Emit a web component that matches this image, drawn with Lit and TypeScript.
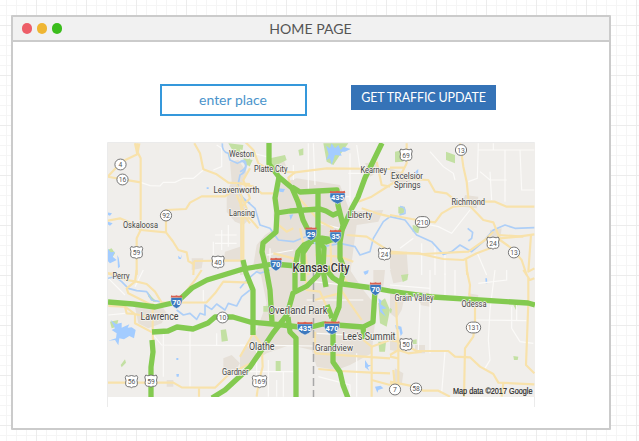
import { LitElement, html, svg, css } from "lit";
import { customElement } from "lit/decorators.js";

// Every list of map sections uses a local origin and a 3:1 drawing scale.
interface Section { x: number; y: number; d: string[] }

const urban: Section[] = [
  { x: 100, y: 135, d: [
    "M390 80L415 75L440 110L425 150L425 195L450 250L430 270L405 260L380 230L380 170L395 140Z",
    "M375 350L420 335L420 380L370 380Z M275 370L310 370L305 400L275 405Z"] },
  { x: 240, y: 135, d: [
    "M0 250L8 290L8 420L0 420Z",
    "M110 150L170 130L300 150L330 230L430 225L415 260L350 270L330 420L60 420L40 390L50 330L75 300L105 280L100 240Z",
    "M85 80L130 70L140 100L110 120Z M375 85L410 80L415 110L390 125Z"] },
  { x: 390, y: 135, d: ["M0 100L60 120L60 150L0 140Z M225 180L265 185L260 220L215 215Z M0 355L50 350L55 420L10 420L0 400Z M300 285L335 280L330 315L300 310Z"] },
  { x: 100, y: 270, d: [
    "M105 110L180 100L200 130L185 160L145 175L115 160Z",
    "M370 265L395 255L420 280L400 310L370 300Z M200 330L220 330L220 350L200 350Z"] },
  { x: 240, y: 270, d: [
    "M60 0L330 0L370 60L410 110L395 250L330 285L290 300L230 290L215 240L150 225L80 250L0 300L0 260L50 180L80 100Z",
    "M400 0L435 0L430 50L400 50Z"] },
  { x: 390, y: 270, d: [
    "M0 0L50 0L35 35L10 40Z M0 70L45 75L35 120L20 145L0 130Z M90 65L125 70L120 110L90 105Z",
    "M0 200L40 205L30 245L0 240Z M15 295L40 310L35 345L10 335Z M75 225L105 225L105 250L75 250Z M235 70L265 75L260 110L235 105Z"] },
];

const parks: Section[] = [
  { x: 240, y: 135, d: ["M10 70L38 75L30 92L15 90Z M90 70L135 60L140 75L110 90L95 105Z M250 25L325 25L310 45L280 90L260 80Z M175 45L190 40L190 60L178 62Z"] },
  { x: 100, y: 135, d: ["M385 25L430 30L425 60L400 50Z M435 80L450 70L450 95Z M22 345L35 340L45 355L35 370Z"] },
  { x: 390, y: 135, d: ["M15 50L40 45L40 80L15 82Z M168 50L195 60L195 85L168 75Z M25 215L45 215L40 240L25 235Z M68 270L90 275L85 295L68 290Z"] },
  { x: 100, y: 270, d: ["M30 155L55 150L50 170L35 175Z M362 180L378 178L384 212L365 215Z M62 285L75 268L78 278L65 292Z M143 65L155 80L170 95L160 95L145 80Z"] },
  { x: 240, y: 270, d: ["M107 273L122 273L122 303L107 303Z M70 108L88 108L88 125L70 125Z M415 100L435 85L450 120L440 170L420 160Z M415 215L438 215L435 245L418 245Z"] },
  { x: 390, y: 270, d: ["M33 15L55 12L52 30L38 36Z M68 210L80 208L80 222L68 222Z M370 258L385 260L383 270L372 270Z M370 105L383 105L378 120Z M0 113L6 118L4 128L0 128Z"] },
];

const lakes: Section[] = [
  { x: 100, y: 135, d: ["M23 232L36 235L30 242L23 240Z M23 260L38 265L30 272L23 268Z M23 340L32 352L45 350L38 365L50 375L30 385L23 378Z M52 360L56 368L60 395L54 400Z M234 362L242 368L246 358L243 372L236 372Z M320 157L326 157L326 162L320 162Z"] },
  { x: 240, y: 135, d: ["M258 32L270 40L275 25L285 40L295 30L302 45L310 35L332 42L315 50L300 50L305 62L285 60L275 90L270 70L258 75L266 58Z M115 160L135 162L130 172L118 170Z M148 240L160 238L152 255Z"] },
  { x: 100, y: 270, d: ["M32 150L48 162L65 158L65 173L88 163L83 173L95 172L107 180L102 205L88 198L72 208L58 205L55 226L45 210L25 212L48 205L50 190L35 180L45 175Z M229 264L235 264L235 270L229 270Z M229 312L237 312L236 320L230 320Z"] },
  { x: 240, y: 270, d: ["M415 85L425 92L422 103L440 115L425 118L438 140L420 125L418 105Z M375 270L385 285L395 285L383 292L388 302L375 292Z M405 350L422 347L430 355L415 360L412 368Z M370 5L386 0L384 10L375 15Z"] },
  { x: 390, y: 270, d: ["M16 165L34 170L38 190L32 198L28 178L18 178Z M286 25L291 25L292 40L287 40Z"] },
  { x: 390, y: 135, d: ["M75 110L85 102L84 120L77 120Z"] },
];

const rivers: Section[] = [
  { x: 100, y: 135, d: ["M367 25Q365 50 385 55L390 75L412 85Q435 70 438 95Q435 115 420 120L412 160L432 195L450 205"] },
  { x: 240, y: 135, d: [
    "M0 80Q18 70 18 90Q15 105 0 110 M0 180L45 220L60 270L90 280L115 315L160 320L210 300",
    "M200 315L250 335L300 325L345 335L360 360L390 350L400 310L430 260L450 245"] },
  { x: 390, y: 135, d: [
    "M0 245L45 255L80 300L125 320L160 358L185 350L210 330L245 350L280 320L310 285L345 270L375 280L433 278",
    "M233 280L248 292L245 310L235 318 M30 215Q48 215 45 235L28 240"] },
  { x: 100, y: 270, d: [
    "M23 25L45 20L65 35L85 55L110 62L140 65L155 90L180 95",
    "M230 120L250 135L270 130L290 148L300 130L315 135L315 105L335 118L350 102L375 120L385 100L410 108L425 80L450 60"] },
  { x: 240, y: 270, d: ["M0 55L20 30L50 5L60 10 M60 10L90 0"] },
];

const lanes: Section[] = [
  { x: 100, y: 135, d: ["M122 142L150 152L180 153L190 142L225 142L250 130L280 130L310 105 M365 40L365 95L340 105 M365 40L350 30 M340 320L340 365 M345 300H410 M365 285V345 M385 270V335 M345 325H410"] },
  { x: 240, y: 135, d: ["M0 45L60 60L80 65 M205 25V165 M220 25L225 150 M160 90V135 M330 55V200 M350 30L360 100 M300 185H330 M325 115H440 M240 265L300 280 M80 360L160 345 M90 340V400"] },
  { x: 390, y: 135, d: ["M120 50L160 95L190 115L195 135 M265 25L262 130L235 140 M265 45H433 M345 45V200 M300 110L305 195 M310 25V45 M390 45L395 165H433 M100 265L145 275L185 295L240 225 M70 310L30 340 M95 325V420 M135 330V420 M260 350L290 420 M350 135H300L270 110 M165 360V420"] },
  { x: 100, y: 270, d: ["M160 195L185 225L450 227 M190 180V320 M270 175V350 M75 75L20 20 M130 0L105 50 M310 60V95 M350 190V227 M25 135L75 130"] },
  { x: 240, y: 270, d: ["M0 225L220 228 M50 225V375 M85 270V380 M0 305H160 M110 330V380 M130 305V380 M235 320L330 345V380 M350 250V380 M220 35L310 45 M200 90L370 90 M230 190L420 200"] },
  { x: 390, y: 270, d: ["M120 0V250 M90 100L85 240 M165 10V90 M315 0L300 120L295 210L300 270L285 295 M255 150L410 152 M365 110L365 175L390 215L430 220 M0 45L120 55 M195 0V75 M265 40L350 30V0 M165 245L155 370 M380 90V150"] },
];

const highways: Section[] = [
  { x: 100, y: 135, d: [
    "M112 25V50L122 70V142V285 M105 25L112 58 M118 25L112 58L65 80L23 125L68 133L122 142",
    "M283 25L300 55L310 103L350 118L385 143L450 147 M198 228V225L258 222L270 203L305 184L375 184L410 160",
    "M198 225V292 M23 257L60 250L85 260L122 285L198 292L218 318L235 345L260 352L265 378L282 388",
    "M122 285L110 310V420 M282 378L424 376V190 M282 378L280 420 M410 150L440 220L435 245L450 265 M410 180L425 215L450 190L430 135L450 100 M23 415L90 420"] },
  { x: 240, y: 135, d: [
    "M15 20L40 45L55 85L95 108L165 112L260 100L450 102",
    "M165 112L145 128L155 165L200 215L240 260L280 280",
    "M0 145L40 155L65 175L100 175 M0 210L25 245L55 280 M410 80L425 150L450 155 M355 200L395 185L450 150",
    "M365 220L410 235L450 245 M110 265L140 290L160 280 M10 380V240 M100 355L160 370V420 M180 280L195 350L205 420",
    "M225 360L300 365L340 380 M320 300L380 305L450 350 M270 290L275 420"] },
  { x: 390, y: 135, d: [
    "M50 25L50 85L35 115L0 120 M0 98L45 98 M0 150L30 130L115 135L135 170L170 175L200 200L235 210",
    "M210 25L220 95L230 140L237 210 M237 210L190 215L155 235L135 262L65 252L0 240",
    "M237 210L270 200L315 200L350 215H433 M237 210L280 255L310 262L325 300L330 315L365 340L395 375L410 420",
    "M0 355L85 355L160 372L220 375L260 355L300 340L330 310L385 305L433 298",
    "M0 350L100 357L235 350L285 315L310 290 M325 300L400 305 M228 370L232 420 M423 300L415 410L433 400"] },
  { x: 100, y: 270, d: [
    "M110 0L105 35L80 55L85 70L155 105 M23 10L80 30L110 35L140 42L165 65L185 98L320 97L345 70L370 35L450 38",
    "M305 0L285 30L235 95 M75 110L80 130L105 132V160L158 188L160 240 M25 108L75 110L105 132L158 145L185 130 M158 100V188",
    "M23 338H220L245 352L345 353L385 315L450 280 M297 353V380"] },
  { x: 240, y: 270, d: [
    "M40 190L65 225L68 290L55 340L50 380 M40 190L0 260",
    "M195 0L200 60L240 65L260 110L290 160 M300 55L330 100L365 150 M370 210L395 230V380 M225 250L450 265 M235 297L300 303L395 308L450 310",
    "M395 230L450 210 M330 50L310 20 M225 90L260 80L300 70 M395 330L450 345 M225 185V250"] },
  { x: 390, y: 270, d: [
    "M230 0L240 45L238 75L255 105V155L250 200L225 235L222 380 M415 20L415 98L408 285L433 310 M400 0L420 30L433 25",
    "M18 75L20 145L25 220V350L0 340 M0 210L25 215L80 243L175 243L195 260L240 262L270 290L310 312L325 338L433 343",
    "M25 265L0 260 M25 240L55 250L95 245 M0 255L25 240 M0 335L75 350L100 362L145 362L180 380 M340 340L335 380 M10 300L15 350"] },
];

const green = [
  "M269 143V164L279 177L292 188L298 202L303 220L308 230L314 241",
  "M279 177L275 198L277 213L276 232L263 243L262 252L266 268L270 290L272 322",
  "M292 187L300 192L337 190L338 205L343 225L340 242V258L344 268L340 287L339 307L333 322",
  "M277 213L290 211L320 209L326 211L333 215L338 213",
  "M382 143L365 178L358 197L352 208L343 228L335 240L322 238L311 240",
  "M318 192V241L319 272",
  "M108 302L133 304L155 307L177 302L192 288L207 280L243 269L273 264L297 266L312 269",
  "M327 266L328 272L333 278L343 284L373 288L390 291L433 297L528 303L535 305",
  "M152 332L168 331L177 327L193 329L208 323L215 317H233L250 322L283 325L307 328L323 324L363 327L373 322L375 290",
  "M152 340L153 352L151 367V398",
  "M212 398L225 390L250 367L263 348L273 333L287 315L293 293L307 286L318 275L320 266",
  "M288 317L290 332L296 338V398",
  "M333 323V362L340 372L343 385L348 398",
  "M243 260L246 273L253 290V335",
  "M313 241L304 245L298 252L295 268V290",
  "M311 241L303 253V281 M318 240L324 248L323 270L326 287 M319 238L326 242L336 238",
  "M327 305L332 318 M363 327L364 339",
];

// text, x, baseline, width, font size
const places: [string, number, number, number, number][] = [
  ["Weston", 229, 157, 25, 8.8], ["Platte City", 254, 172, 33.5, 8.8], ["Kearney", 360.5, 172.5, 26.5, 8.8],
  ["Excelsior", 391, 179, 32, 8.8], ["Springs", 394, 188, 26.5, 8.8], ["Richmond", 451.5, 205, 33.5, 8.8],
  ["Leavenworth", 213.5, 193, 46, 8.8], ["Lansing", 229, 216, 26, 8.8], ["Liberty", 347.5, 218, 24.5, 9.2],
  ["Oskaloosa", 123, 228, 35, 8.8], ["Perry", 112.5, 279, 17, 8.8], ["Lawrence", 140.5, 320, 38, 10.3],
  ["Overland Park", 268.5, 313.5, 59, 11], ["Olathe", 249, 350.3, 25.5, 10], ["Grandview", 315, 350.7, 38, 9],
  ["Lee's Summit", 342.5, 339.5, 53, 10.3], ["Gardner", 222, 375, 26.5, 8.8], ["Grain Valley", 394.5, 301, 39, 8.8],
  ["Odessa", 461.5, 307, 25, 8.8],
];

// number, centre x, centre y, kind: o = round state shield, u = US shield
const shields: [string, number, number, string][] = [
  ["4", 120.5, 164.5, "o"], ["16", 122.5, 179.5, "o"], ["92", 166, 215.5, "o"], ["59", 136.5, 252.5, "u"],
  ["40", 218, 262, "u"], ["69", 406, 155, "u"], ["13", 461, 150, "o"], ["210", 422.5, 222, "o"],
  ["24", 493, 243, "u"], ["13", 514, 252.5, "o"], ["24", 384.5, 254, "u"], ["10", 222.5, 317.5, "o"],
  ["56", 131.5, 381.5, "u"], ["59", 151, 381, "u"], ["169", 259.5, 381.5, "u"], ["131", 473.5, 327.5, "o"],
  ["50", 406, 344.5, "u"], ["7", 395, 389.5, "o"], ["58", 416, 388.5, "o"],
];
const interstates: [string, number, number][] = [
  ["435", 337.5, 197], ["29", 311, 233.5], ["35", 335.5, 236], ["70", 276, 264],
  ["70", 176.5, 301.5], ["70", 375.5, 288.5], ["435", 305, 328], ["470", 332, 327.5],
];

const layer = (sections: Section[], cls: string) => sections.map(
  (s) => svg`<g class=${cls} transform="translate(${s.x} ${s.y}) scale(.33333)">${s.d.map((d) => svg`<path d=${d}></path>`)}</g>`
);

@customElement("traffic-map")
class TrafficMap extends LitElement {
  static styles = css`
    :host { display: block; width: 429px; height: 266px; }
    svg { display: block; overflow: visible; }
    .urban path { fill: #e6e0d8; }
    .parks path { fill: #c3e0a3; }
    .lakes path { fill: #a3ccff; }
    .rivers path { fill: none; stroke: #aecff7; stroke-width: 5; stroke-linejoin: round; }
    .lanes path { fill: none; stroke: #fbfaf8; stroke-width: 3.5; }
    .highways path { fill: none; stroke: #f8e2ab; stroke-width: 6.5; stroke-linejoin: round; }
    .green { fill: none; stroke: #83ca50; stroke-width: 5.3; stroke-linejoin: round; }
    .border { stroke: #a8a8a8; stroke-width: 1.5; stroke-dasharray: 8 4; }
    text { font-family: Roboto, "Liberation Sans", sans-serif; }
    .place { fill: #454545; stroke: #f5f3ef; stroke-width: 1.6; paint-order: stroke; }
    .city { font-size: 12px; font-weight: 500; fill: #333; }
    .sign { fill: #fff; stroke: #666; stroke-width: 0.9; }
    .num { font-size: 7.5px; fill: #555; text-anchor: middle; }
    .inum { font-size: 7.6px; font-weight: 700; fill: #fff; text-anchor: middle; }
    .blue { fill: #3c78bd; stroke: #e9eef5; stroke-width: 0.5; }
    .red { fill: #d9604f; }
    .credit { font-family: "Liberation Sans", sans-serif; font-size: 8.2px; fill: #222; stroke: #222; stroke-width: 0.15; }
    .frame { fill: none; stroke: #ebebeb; }
  `;

  render() {
    return html`<svg width="429" height="266" viewBox="107 142 429 266">
      <defs><clipPath id="area"><rect x="108" y="143" width="427" height="254"></rect></clipPath></defs>
      <path class="frame" d="M107.5 407V142.5H534.5V407"></path>
      <g clip-path="url(#area)">
        <rect x="108" y="143" width="427" height="254" fill="#f0eeeb"></rect>
        ${layer(urban, "urban")}${layer(parks, "parks")}${layer(lakes, "lakes")}${layer(lanes, "lanes")}
        ${layer(rivers, "rivers")}${layer(highways, "highways")}
        <path class="border" d="M313.5 270V397"></path>
        ${green.map((d) => svg`<path class="green" d=${d}></path>`)}
      </g>
      ${shields.map(([n, x, y, kind]) => {
        const w = n.length > 2 ? 7.2 : kind === "u" ? 6.2 : 5.6;
        return svg`<g transform="translate(${x} ${y})">${kind === "o"
          ? svg`<rect class="sign" x=${-w} y="-5.4" width=${2 * w} height="10.8" rx="5.4"></rect>`
          : svg`<path class="sign" d="M${-w + 1} -6L${-w / 2} -5.2L0 -6L${w / 2} -5.2L${w - 1} -6L${w} -4L${w - 0.7} -1Q${w + 0.6} 4.5 ${w - 2.5} 5.2Q1 5 0 6.2Q-1 5 ${-w + 2.5} 5.2Q${-w - 0.6} 4.5 ${-w + 0.7} -1L${-w} -4Z"></path>`}
          <text class="num" y="2.7" textLength=${n.length * 3.8} lengthAdjust="spacingAndGlyphs">${n}</text></g>`;
      })}
      ${interstates.map(([n, x, y]) => {
        const w = n.length > 2 ? 7.8 : 5.8;
        return svg`<g transform="translate(${x} ${y})">
          <path class="blue" d="M${-w + 0.3} -4H${w - 0.3}Q${w + 1.2} 4 0 7Q${-w - 1.2} 4 ${-w + 0.3} -4Z"></path>
          <path class="red" d="M${-w + 0.5} -6.3Q${-w / 2} -5.3 0 -6.3Q${w / 2} -5.3 ${w - 0.5} -6.3L${w} -4H${-w}Z"></path>
          <text class="inum" y="3">${n}</text></g>`;
      })}
      ${places.map(([t, x, y, w, s]) => svg`<text class="place" x=${x} y=${y} font-size=${s} textLength=${w} lengthAdjust="spacingAndGlyphs">${t}</text>`)}
      <text class="place city" x="292.5" y="271.5" textLength="57" lengthAdjust="spacingAndGlyphs">Kansas City</text>
      <text class="credit" x="453" y="393.8" textLength="79.5" lengthAdjust="spacingAndGlyphs">Map data ©2017 Google</text>
    </svg>`;
  }
}

@customElement("app-root")
class AppRoot extends LitElement {
  static styles = css`
    :host {
      display: block; box-sizing: border-box; height: 441px; overflow: hidden;
      padding: 15px 28px 10px 11px;
      font-family: Lato, "Liberation Sans", sans-serif;
      background-color: #fff;
      background-image:
        linear-gradient(90deg, #ececec 1px, transparent 1px),
        linear-gradient(#ececec 1px, transparent 1px),
        linear-gradient(90deg, #f5f5f5 1px, transparent 1px),
        linear-gradient(#f5f5f5 1px, transparent 1px);
      background-size: 50px 50px, 50px 50px, 10px 10px, 10px 10px;
      background-position: 36px 0, 0 25px, 6px 0, 0 5px;
    }
    .window {
      box-sizing: border-box; width: 600px; height: 415px;
      border: 2px solid #cbcbcb; border-radius: 1px; background: #fff;
      display: flex; flex-direction: column;
    }
    .bar {
      box-sizing: border-box; height: 25px; flex: none; background: #f1f1f1; border-bottom: 2px solid #cbcbcb;
      display: grid; grid-template-columns: 60px 1fr 60px; align-items: center;
    }
    .dots { display: flex; gap: 4.5px; padding-left: 8.5px; }
    .dot { width: 10.5px; height: 10.5px; border-radius: 50%; }
    .close { background: #ed5e68; }
    .min { background: #efb633; }
    .max { background: #3bbd1c; }
    .title { text-align: center; font-size: 14.1px; line-height: 22px; color: #555; padding-right: 1px; }
    .controls { display: flex; align-items: flex-start; gap: 44px; padding: 42px 0 0 147px; height: 32px; }
    .place {
      box-sizing: border-box; width: 147px; height: 32px; border: 2px solid #3598db;
      text-align: center; font-size: 14px; line-height: 28px; color: #4b94cb; padding-right: 1px;
    }
    .update {
      box-sizing: border-box; width: 145px; height: 25px; margin-top: 1px; border: 0; padding: 0;
      background: #3573b7; color: #fff; font: 12.5px/25px Lato, "Liberation Sans", sans-serif; white-space: nowrap;
      text-align: center; letter-spacing: -0.15px;
    }
    traffic-map { margin: 26px 0 0 94px; }
  `;

  render() {
    return html`<main class="window">
      <header class="bar">
        <div class="dots"><i class="dot close"></i><i class="dot min"></i><i class="dot max"></i></div>
        <div class="title">HOME PAGE</div>
      </header>
      <section class="controls">
        <div class="place">enter place</div>
        <button class="update">GET TRAFFIC UPDATE</button>
      </section>
      <traffic-map></traffic-map>
    </main>`;
  }
}
